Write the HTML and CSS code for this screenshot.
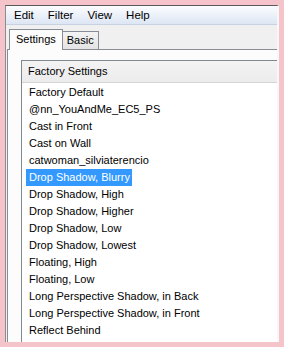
FILE: index.html
```html
<!DOCTYPE html>
<html lang="en">
<head>
    <meta charset="UTF-8">
    <meta name="viewport" content="width=device-width, initial-scale=1.0">
    <title>Settings</title>
    <link rel="stylesheet" href="styles.css">
</head>
<body>
    <div class="window">
        <div class="menubar">
            <span>Edit</span>
            <span>Filter</span>
            <span>View</span>
            <span>Help</span>
        </div>

        <div class="tabs">
            <div class="tab active">Settings</div>
            <div class="tab">Basic</div>
        </div>

        <div class="page">
            <div class="listbox">
                <div class="list-head">Factory Settings</div>
                <ul class="list">
                    <li><span>Factory Default</span></li>
                    <li><span>@nn_YouAndMe_EC5_PS</span></li>
                    <li><span>Cast in Front</span></li>
                    <li><span>Cast on Wall</span></li>
                    <li><span>catwoman_silviaterencio</span></li>
                    <li class="selected"><span>Drop Shadow, Blurry</span></li>
                    <li><span>Drop Shadow, High</span></li>
                    <li><span>Drop Shadow, Higher</span></li>
                    <li><span>Drop Shadow, Low</span></li>
                    <li><span>Drop Shadow, Lowest</span></li>
                    <li><span>Floating, High</span></li>
                    <li><span>Floating, Low</span></li>
                    <li><span>Long Perspective Shadow, in Back</span></li>
                    <li><span>Long Perspective Shadow, in Front</span></li>
                    <li><span>Reflect Behind</span></li>
                </ul>
            </div>
        </div>
    </div>
</body>
</html>
```

FILE: styles.css
```css
body {
    margin: 0;
    padding: 5px 0 0 5px;
    background-color: #f5c3ca;
    font-family: 'Liberation Sans', Arial, sans-serif;
    font-size: 11px;
    color: #000;
    height: 347px;
    box-sizing: border-box;
    overflow: hidden;
}

.window {
    width: 274px;
    height: 337px;
    background-color: #f0f0f0;
    border-top: 1px solid #5a5a5a;
    border-left: 1px solid #8c8c8c;
    border-right: 2px solid #f7f7f7;
    box-sizing: border-box;
    overflow: hidden;
}

.menubar {
    height: 18px;
    display: flex;
    align-items: center;
    gap: 14px;
    padding-left: 8px;
    font-size: 11.5px;
    background: linear-gradient(#fbfcfe, #dde6f4);
    border-bottom: 1px solid #c7d1e0;
}

.tabs {
    display: flex;
    align-items: flex-end;
    height: 24px;
    padding-left: 3px;
}

.tab {
    height: 17px;
    line-height: 17px;
    padding: 0 4px;
    border: 1px solid #898c95;
    border-bottom: none;
    background: linear-gradient(#f3f3f3, #e3e3e3);
}

.tab.active {
    height: 20px;
    line-height: 19px;
    padding: 0 6px;
    background: #fcfcfc;
    position: relative;
    top: 1px;
    z-index: 1;
    margin-right: -1px;
}

.page {
    margin-left: 1px;
    width: 300px;
    border: 1px solid #898c95;
    background: #fcfcfc;
    padding: 10px 0 0 13px;
    height: 320px;
}

.listbox {
    width: 300px;
    border: 1px solid #828790;
    background: #fff;
    height: 310px;
}

.list-head {
    height: 21px;
    line-height: 21px;
    padding-left: 6px;
    background: linear-gradient(#f3f3f3, #ececec);
    border-bottom: 1px solid #d5d5d5;
}

.list {
    list-style: none;
    margin: 0;
    padding: 1px 0 0 4px;
}

.list li {
    height: 17px;
    line-height: 17px;
}

.list li span {
    display: inline-block;
    padding: 0 2px 0 3px;
}

.list li.selected span {
    background-color: #3399ff;
    color: #fff;
}
```
